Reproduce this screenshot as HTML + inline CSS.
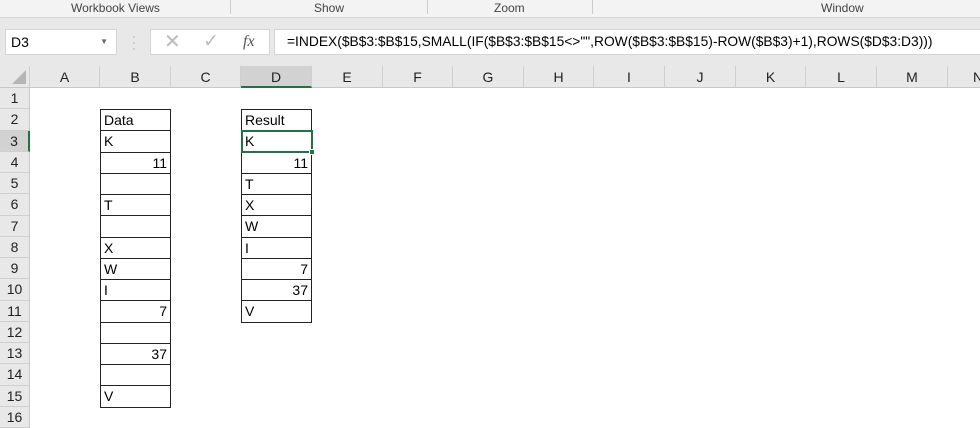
<!DOCTYPE html><html><head><style>
*{margin:0;padding:0;box-sizing:border-box}
body{width:980px;height:422px;overflow:hidden;background:#fff;font-family:"Liberation Sans",Arial,sans-serif;position:relative}
.a{position:absolute}
.rib{left:0;top:0;width:980px;height:18px;background:#f3f3f3;border-bottom:1px solid #d6d6d6;font-size:12px;color:#444}
.fb{left:0;top:18px;width:980px;height:48px;background:#e8e8e8}
.box{background:#fff;border:1px solid #d4d4d4}
.ch{top:66px;height:22px;background:#e8e8e8;border-right:1px solid #cfcfcf;border-bottom:1px solid #c8c8c8;font-size:14px;text-align:center;line-height:22px;color:#222}
.rh{left:0;width:30px;height:21.25px;background:#e8e8e8;border-bottom:1px solid #cfcfcf;border-right:1px solid #c8c8c8;font-size:14px;text-align:center;line-height:21px;color:#222}
.c{height:22.25px;border:1px solid #222;font-size:14px;line-height:20px;padding:0 3px;color:#000;width:71px}
.r{text-align:right}
</style></head><body>
<div class="a rib">
<span class="a" style="left:71px;top:1px">Workbook Views</span>
<span class="a" style="left:314px;top:1px">Show</span>
<span class="a" style="left:494px;top:1px">Zoom</span>
<span class="a" style="left:821px;top:1px">Window</span>
<div class="a" style="left:230px;top:0;width:1px;height:14px;background:#ccc"></div>
<div class="a" style="left:427px;top:0;width:1px;height:14px;background:#ccc"></div>
<div class="a" style="left:592px;top:0;width:1px;height:14px;background:#ccc"></div>
</div>
<div class="a fb"></div>
<div class="a box" style="left:5px;top:29px;width:112px;height:26px;font-size:14px;line-height:24px;padding-left:5px">D3<span class="a" style="right:8px;top:0;font-size:8px;color:#666">▼</span></div>
<div class="a" style="left:132px;top:33px;color:#aaa;font-size:12px;line-height:6px">·<br>·<br>·</div>
<div class="a box" style="left:150px;top:29px;width:120px;height:26px">
<span class="a" style="left:13px;top:0;font-size:20px;color:#bbb;line-height:24px">✕</span>
<span class="a" style="left:52px;top:0;font-size:19px;color:#bbb;line-height:24px">✓</span>
<span class="a" style="left:92px;top:1px;font-size:16px;font-style:italic;font-family:'Liberation Serif',serif;color:#555;line-height:22px">fx</span></div>
<div class="a box" style="left:274px;top:29px;width:710px;height:26px;font-size:13.8px;line-height:24px;padding-left:12px;white-space:nowrap">=INDEX($B$3:$B$15,SMALL(IF($B$3:$B$15&lt;&gt;"",ROW($B$3:$B$15)-ROW($B$3)+1),ROWS($D$3:D3)))</div>
<div class="a ch" style="left:0;width:30px"><div class="a" style="right:3px;bottom:3px;width:0;height:0;border-left:14px solid transparent;border-bottom:14px solid #b5b5b5"></div></div>
<div class="a ch" style="left:30px;width:70px">A</div>
<div class="a ch" style="left:100px;width:71px">B</div>
<div class="a ch" style="left:171px;width:70px">C</div>
<div class="a ch" style="left:241px;width:71px;background:#d2d2d2;border-bottom:2px solid #217346">D</div>
<div class="a ch" style="left:312px;width:71px">E</div>
<div class="a ch" style="left:383px;width:70px">F</div>
<div class="a ch" style="left:453px;width:71px">G</div>
<div class="a ch" style="left:524px;width:70px">H</div>
<div class="a ch" style="left:594px;width:71px">I</div>
<div class="a ch" style="left:665px;width:71px">J</div>
<div class="a ch" style="left:736px;width:70px">K</div>
<div class="a ch" style="left:806px;width:71px">L</div>
<div class="a ch" style="left:877px;width:71px">M</div>
<div class="a ch" style="left:948px;width:71px;text-align:left;padding-left:25px">N</div>
<div class="a rh" style="top:88px">1</div>
<div class="a rh" style="top:109.25px">2</div>
<div class="a rh" style="top:130.5px;background:#d2d2d2;border-right:2px solid #217346">3</div>
<div class="a rh" style="top:151.75px">4</div>
<div class="a rh" style="top:173px">5</div>
<div class="a rh" style="top:194.25px">6</div>
<div class="a rh" style="top:215.5px">7</div>
<div class="a rh" style="top:236.75px">8</div>
<div class="a rh" style="top:258px">9</div>
<div class="a rh" style="top:279.25px">10</div>
<div class="a rh" style="top:300.5px">11</div>
<div class="a rh" style="top:321.75px">12</div>
<div class="a rh" style="top:343px">13</div>
<div class="a rh" style="top:364.25px">14</div>
<div class="a rh" style="top:385.5px">15</div>
<div class="a rh" style="top:406.75px">16</div>
<div class="a c" style="left:100px;top:109px">Data</div>
<div class="a c" style="left:100px;top:130.25px">K</div>
<div class="a c r" style="left:100px;top:151.5px">11</div>
<div class="a c" style="left:100px;top:172.75px"></div>
<div class="a c" style="left:100px;top:194px">T</div>
<div class="a c" style="left:100px;top:215.25px"></div>
<div class="a c" style="left:100px;top:236.5px">X</div>
<div class="a c" style="left:100px;top:257.75px">W</div>
<div class="a c" style="left:100px;top:279px">I</div>
<div class="a c r" style="left:100px;top:300.25px">7</div>
<div class="a c" style="left:100px;top:321.5px"></div>
<div class="a c r" style="left:100px;top:342.75px">37</div>
<div class="a c" style="left:100px;top:364px"></div>
<div class="a c" style="left:100px;top:385.25px">V</div>
<div class="a c" style="left:241px;top:109px">Result</div>
<div class="a c" style="left:241px;top:130.25px">K</div>
<div class="a c r" style="left:241px;top:151.5px">11</div>
<div class="a c" style="left:241px;top:172.75px">T</div>
<div class="a c" style="left:241px;top:194px">X</div>
<div class="a c" style="left:241px;top:215.25px">W</div>
<div class="a c" style="left:241px;top:236.5px">I</div>
<div class="a c r" style="left:241px;top:257.75px">7</div>
<div class="a c r" style="left:241px;top:279px">37</div>
<div class="a c" style="left:241px;top:300.25px">V</div>
<div class="a" style="left:241px;top:130px;width:72px;height:23px;border:2px solid #217346"></div>
<div class="a" style="left:309px;top:149px;width:6px;height:6px;background:#217346;border:1px solid #fff"></div>
</body></html>
